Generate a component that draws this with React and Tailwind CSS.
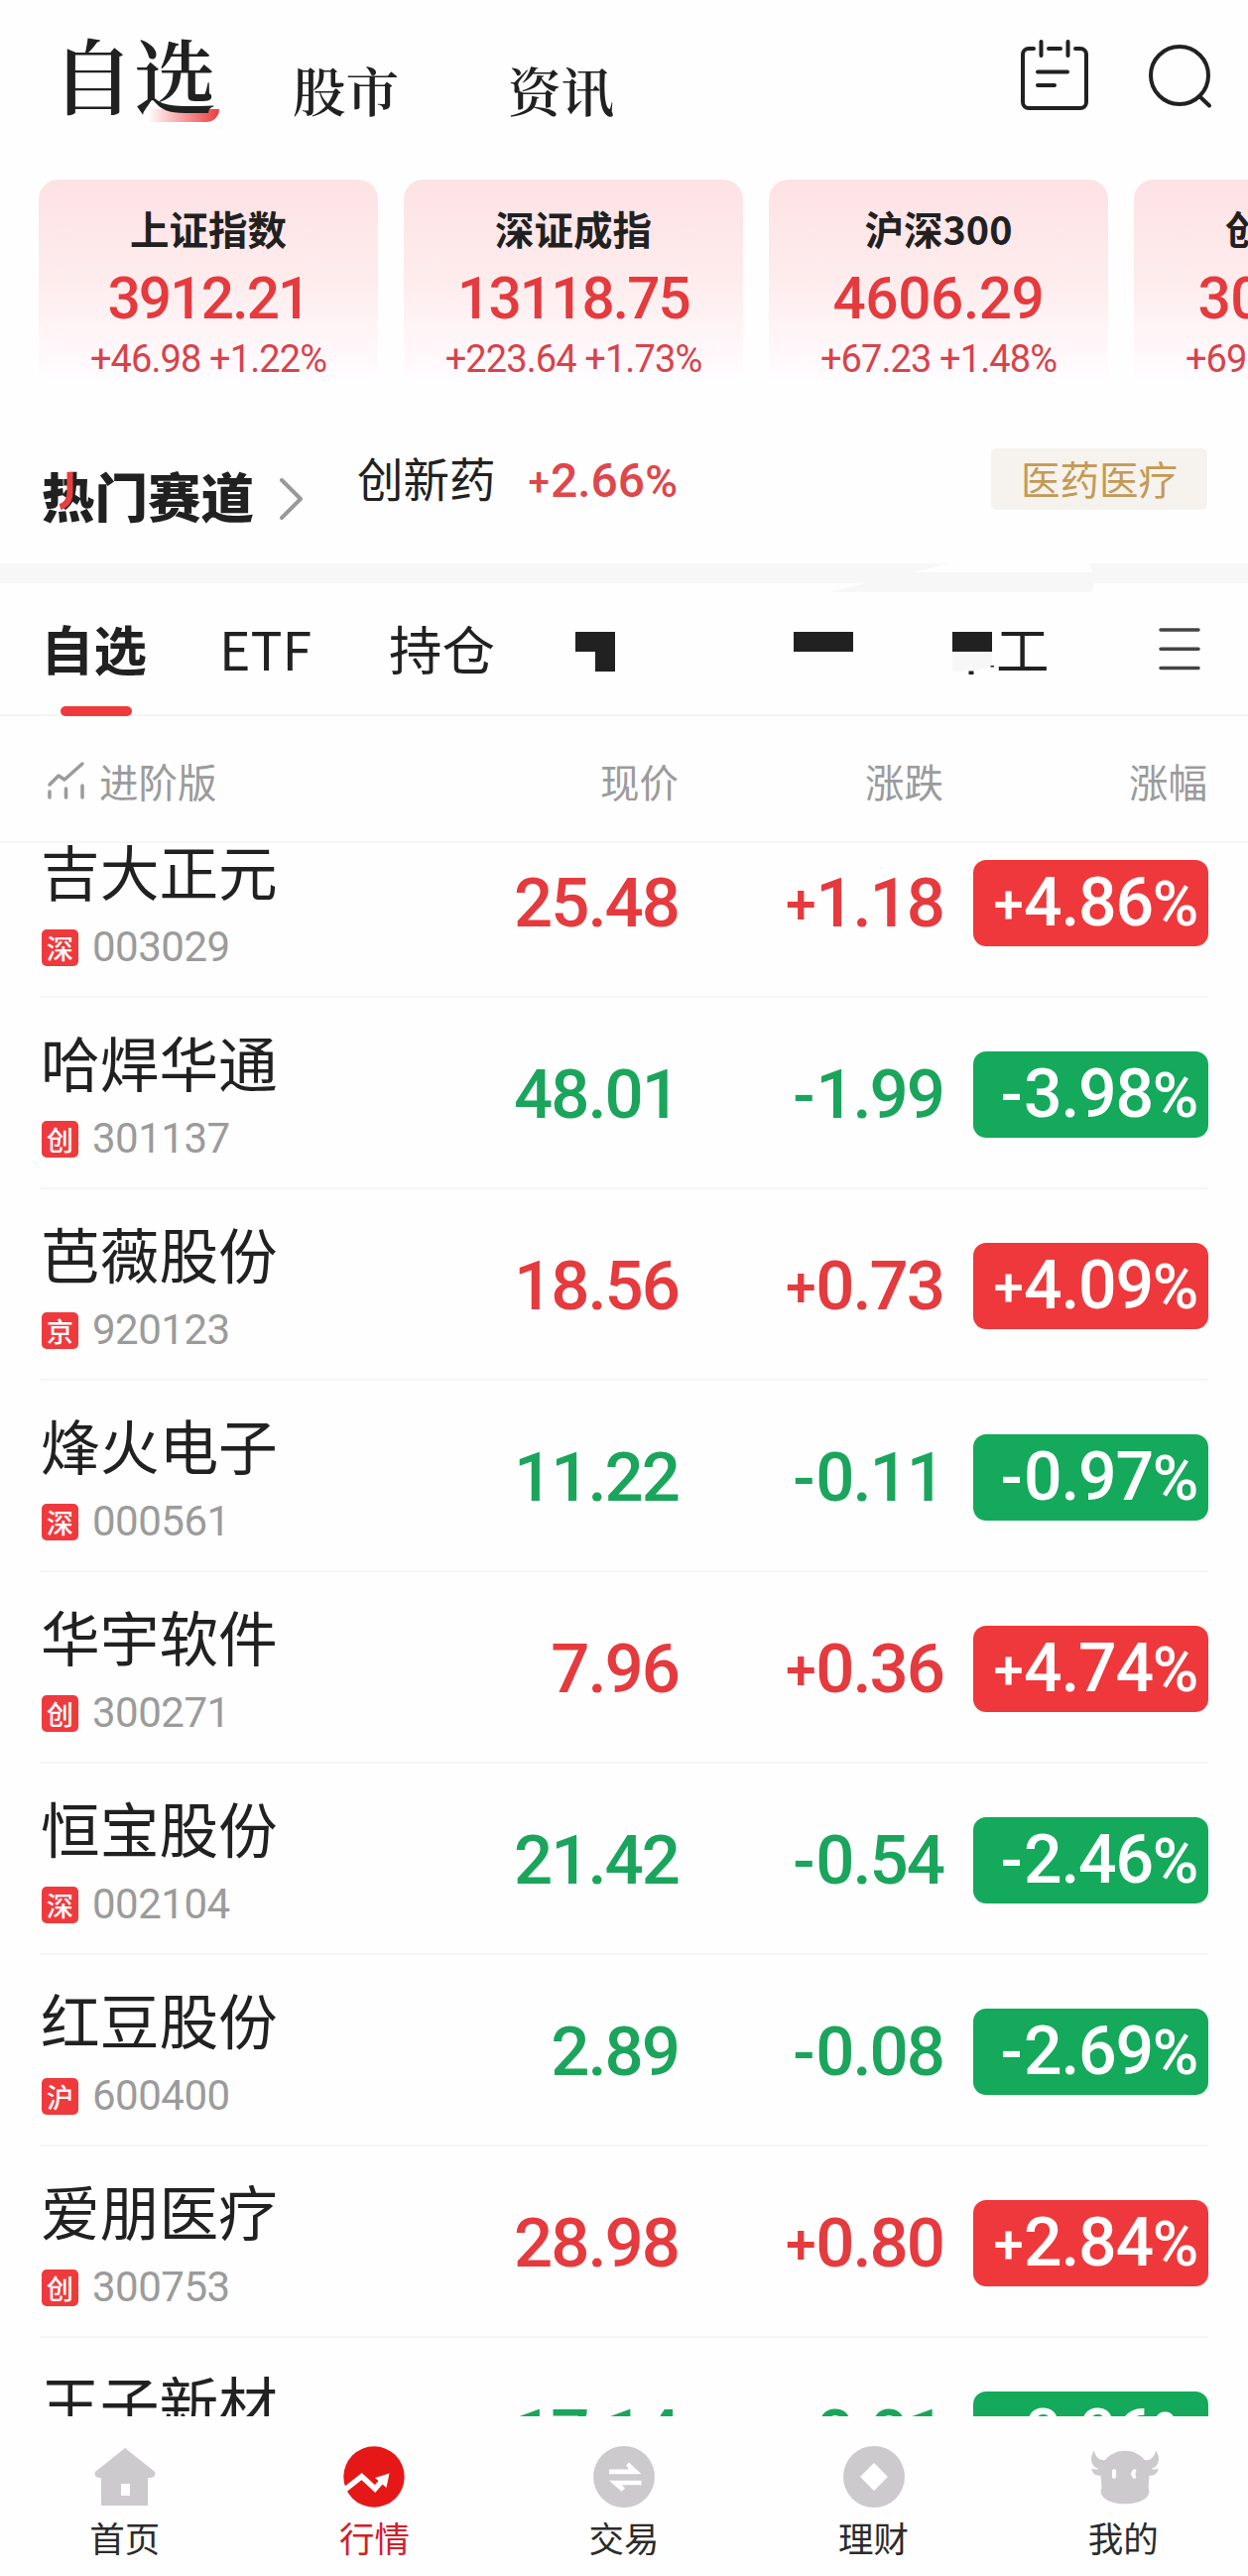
import clsx from "clsx";

const INDEXES = [
  { name: "上证指数", value: "3912.21", change: "+46.98 +1.22%", tracking: "tracking-[-1.8px]" },
  { name: "深证成指", value: "13118.75", change: "+223.64 +1.73%", tracking: "tracking-[-1.9px]" },
  { name: "沪深300", value: "4606.29", change: "+67.23 +1.48%", tracking: "tracking-[-0.4px]" },
  { name: "创业板指", value: "3022.77", change: "+69.27 +2.35%", tracking: "tracking-[-0.4px]" },
];

const STOCKS = [
  { name: "吉大正元", market: "深", code: "003029", price: "25.48", diff: "+1.18", rate: "+4.86%" },
  { name: "哈焊华通", market: "创", code: "301137", price: "48.01", diff: "-1.99", rate: "-3.98%" },
  { name: "芭薇股份", market: "京", code: "920123", price: "18.56", diff: "+0.73", rate: "+4.09%" },
  { name: "烽火电子", market: "深", code: "000561", price: "11.22", diff: "-0.11", rate: "-0.97%" },
  { name: "华宇软件", market: "创", code: "300271", price: "7.96", diff: "+0.36", rate: "+4.74%" },
  { name: "恒宝股份", market: "深", code: "002104", price: "21.42", diff: "-0.54", rate: "-2.46%" },
  { name: "红豆股份", market: "沪", code: "600400", price: "2.89", diff: "-0.08", rate: "-2.69%" },
  { name: "爱朋医疗", market: "创", code: "300753", price: "28.98", diff: "+0.80", rate: "+2.84%" },
  { name: "王子新材", market: "深", code: "002735", price: "17.14", diff: "-0.01", rate: "-0.06%" },
];

// the sign and the percent mark are set a little smaller than the digits
function Num({ text }) {
  const sign = /^[+-]/.test(text) ? text[0] : "";
  const pct = text.endsWith("%") ? "%" : "";
  const digits = text.slice(sign.length, text.length - pct.length);
  return (
    <>
      {sign && (
        <span className={sign === "+" ? "mr-[0.03em] align-[0.06em] text-[0.8em] leading-none" : "mr-[0.04em] text-[0.95em]"}>
          {sign}
        </span>
      )}
      {digits}
      {pct && <span className="text-[0.93em]">{pct}</span>}
    </>
  );
}

function Header() {
  return (
    <header className="flex h-[181px] items-start justify-between pr-[34px] pl-[52px] font-['Noto_Serif_CJK_SC','Noto_Sans_CJK_SC',serif] text-[#212121]">
      <div className="flex items-start">
        <div className="relative mt-[24px] w-[166px] text-[83px] leading-[98px] font-semibold">
          <span className="relative z-10">自选</span>
          <span className="absolute top-[86px] left-[97px] h-[13px] w-[72px] rounded-br-[20px] bg-gradient-to-r from-[#ef3a3d]/0 to-[#ef3a3d]" />
        </div>
        <div className="mt-[58px] ml-[77px] w-[107px] text-[53.500px] leading-[64px] font-semibold">股市</div>
        <div className="mt-[58px] ml-[110px] text-[53.500px] leading-[64px] font-semibold">资讯</div>
      </div>
      <div className="flex">
        <svg className="mt-[38px] h-[76px] w-[72px]" viewBox="0 0 72 76" fill="none" stroke="#212121" strokeWidth="4" strokeLinecap="round">
          <path d="M15 11H10a6 6 0 0 0-6 6v48a6 6 0 0 0 6 6h52a6 6 0 0 0 6-6V17a6 6 0 0 0-6-6h-5M30 11h12M22.500 4v14M49.500 4v14M19 34.500h30M19 48h17" />
        </svg>
        <svg className="mt-[43px] ml-[57px] h-[68px] w-[68px]" viewBox="0 0 68 68" fill="none" stroke="#212121" strokeWidth="4" strokeLinecap="round">
          <circle cx="33" cy="33" r="29" />
          <path d="M53 54l10 9.500" />
        </svg>
      </div>
    </header>
  );
}

function IndexCards() {
  return (
    <section className="flex h-[201px] gap-[26px] overflow-hidden pl-[39px]">
      {INDEXES.map((item) => (
        <div
          key={item.name}
          className="flex w-[342px] shrink-0 flex-col items-center rounded-t-[20px] bg-gradient-to-b from-[#fde2e5] via-[#feeced] to-[#fffcff] whitespace-nowrap"
        >
          <div className="mt-[24px] h-[50px] text-[39.500px] leading-[50px] font-bold text-[#212121]">{item.name}</div>
          <div className={clsx("mt-[11px] h-[70px] font-['Roboto'] text-[58.500px] leading-[70px] font-medium text-[#e53a3e]", item.tracking)}>
            {item.value}
          </div>
          <div className="mt-[6px] h-[40px] font-['Roboto'] text-[38px] leading-[40px] tracking-[-0.9px] text-[#d8434a]">
            {item.change}
          </div>
        </div>
      ))}
    </section>
  );
}

function HotTracks() {
  return (
    <section className="flex h-[186px] items-start pr-[41px] pl-[42px]">
      <div className="relative mt-[82px] text-[53.500px] leading-[70px] font-black text-[#212121]">
        热门赛道
        <svg className="absolute top-[12px] left-[17px] h-[38px] w-[16px]" viewBox="0 0 16 38" fill="none" stroke="#e93f41" strokeWidth="6">
          <path d="M11.500 0v20c0 8-3 13-10 15" />
        </svg>
      </div>
      <svg className="mt-[98px] ml-[24px] h-[46px] w-[28px]" viewBox="0 0 28 46" fill="none" stroke="#999" strokeWidth="4" strokeLinecap="round" strokeLinejoin="round">
        <path d="M4 4l19 19L4 42" />
      </svg>
      <div className="mt-[67px] ml-[52px] text-[46.500px] leading-[64px] text-[#212121]">创新药</div>
      <div className="mt-[71px] ml-[33px] font-['Roboto'] text-[48px] leading-[64px] font-medium text-[#de474c]">
        <Num text="+2.66%" />
      </div>
      <div className="mt-[70px] ml-auto flex h-[62px] w-[218px] items-center justify-center rounded-[6px] bg-[#f6f3ee] pb-[2px] text-[39.500px] text-[#c39a55]">
        医药医疗
      </div>
    </section>
  );
}

function Divider() {
  return (
    <div className="relative h-[20px] bg-[#f7f7f8]">
      <svg className="absolute top-0 left-[830px] h-[30px] w-[280px]" viewBox="0 0 280 30">
        <path d="M126 0L90 9h181q0-6-4-9z" fill="#fefefe" />
        <path d="M42 20L6 29h264.500q2-4 2-9z" fill="#f7f7f8" />
      </svg>
    </div>
  );
}

function Tabs() {
  return (
    <nav className="flex h-[134px] items-start border-b-2 border-[#f5f5f6] pr-[46px] pl-[41px] text-[53.500px] leading-[76px] text-[#212121]">
      <div className="relative mt-[27px] w-[107px] font-bold">
        自选
        <span className="absolute top-[97px] left-[20px] h-[10px] w-[72px] rounded-[5px] bg-[#ef3a3d]" />
      </div>
      <div className="mt-[27px] ml-[73px] w-[94px]">ETF</div>
      <div className="mt-[27px] ml-[77px] w-[107px]">持仓</div>
      <svg className="mt-[49px] ml-[81px] h-[40px] w-[40px]" viewBox="0 0 40 40">
        <path d="M0 0h40v40H20V20H0z" fill="#212121" />
      </svg>
      <div className="mt-[49px] ml-[180px] h-[20px] w-[60px] bg-[#212121]" />
      <svg className="mt-[49px] ml-[100px] h-[44px] w-[44px]" viewBox="0 0 44 44">
        <path d="M0 0h40v20H0z" fill="#212121" />
        <path d="M0 20h40v14q-12 6-40 6z" fill="#f7f7f7" />
        <path d="M16.500 39.500h5v3.500h-5zM38.500 34h3.500v1.500h-3.500z" fill="#212121" />
      </svg>
      <div className="mt-[27px]">工</div>
      <svg className="mt-[44px] ml-auto h-[46px] w-[46px]" viewBox="0 0 46 46" stroke="#444" strokeWidth="3.500" strokeLinecap="round">
        <path d="M4 3h38M4 22.300h38M4 41.500h38" />
      </svg>
    </nav>
  );
}

function TableHead() {
  return (
    <div className="flex h-[128px] items-center border-b-2 border-[#f5f5f6] pt-[4px] pr-[41px] pl-[47px] text-[39.500px] text-[#9b9b9b]">
      <svg className="h-[40px] w-[40px]" viewBox="0 0 40 40" fill="none" stroke="#9b9b9b" strokeWidth="3.500" strokeLinecap="round" strokeLinejoin="round">
        <path d="M3 24l9-9 6 4L36 3M3 31v6M19.500 28v9M36 25v12" />
      </svg>
      <div className="ml-[13px]">进阶版</div>
      <div className="ml-auto">现价</div>
      <div className="w-[267px] text-right">涨跌</div>
      <div className="w-[266px] text-right">涨幅</div>
    </div>
  );
}

function StockRow({ stock }) {
  const up = stock.diff.startsWith("+");
  return (
    <div className="mx-[40px] flex h-[193px] shrink-0 items-start border-b-2 border-[#f6f6f7]">
      <div className="w-[300px] pt-[24px]">
        <div className="h-[80px] pl-[1px] text-[59.700px] leading-[80px] text-[#212121]">{stock.name}</div>
        <div className="mt-[14px] flex h-[48px] items-center pl-[2px]">
          <span className="flex h-[37px] w-[37px] items-center justify-center rounded-[5px] bg-[#ef3a3d] text-[27px] leading-[37px] font-medium text-white">
            {stock.market}
          </span>
          <span className="ml-[14px] font-['Roboto'] text-[42px] leading-[48px] tracking-[-0.5px] text-[#9b9b9b]">{stock.code}</span>
        </div>
      </div>
      <div
        className={clsx(
          "flex flex-1 items-start justify-end font-['Roboto'] text-[69px] leading-[88px] font-medium tracking-[-2px]",
          up ? "text-[#e53a3e]" : "text-[#1ba55c]"
        )}
      >
        <div className="mt-[54px] w-[260px] text-right">{stock.price}</div>
        <div className="mt-[54px] w-[267px] text-right">
          <Num text={stock.diff} />
        </div>
        <div
          className={clsx(
            "mt-[54px] ml-[30px] h-[87px] w-[237px] rounded-[13px] pr-[11px] text-right text-[68px] leading-[87px] tracking-[-1.3px] text-white",
            up ? "bg-[#ef383b]" : "bg-[#14a95b]"
          )}
        >
          <Num text={stock.rate} />
        </div>
      </div>
    </div>
  );
}

const NAV = [
  {
    label: "首页",
    icon: (
      <path
        fillRule="evenodd"
        fill="#cdcace"
        d="M32 3L62 27q2 5-4 6h-3v28H8V33H6q-6-1-4-6zM28 39v12h9V39z"
      />
    ),
  },
  {
    label: "行情",
    active: true,
    icon: (
      <>
        <circle cx="32" cy="32" r="30.700" fill="#e61717" />
        <path d="M-1 45l5-1 15.600-12.400L33 44l8-9" fill="none" stroke="#fff" strokeWidth="5.500" />
        <path d="M47.500 28.500L33 33l11.500 10z" fill="#fff" />
      </>
    ),
  },
  {
    label: "交易",
    icon: (
      <>
        <circle cx="32" cy="32" r="31" fill="#cdcace" />
        <path d="M17 24.500h20l-3-4 3-3L49.500 29.300H17zM49.500 40.300H30l3 3.500-3.500 3L17 35.700h32.500z" fill="#fff" />
      </>
    ),
  },
  {
    label: "理财",
    icon: (
      <>
        <circle cx="32" cy="32" r="31" fill="#cdcace" />
        <path d="M32 18l14 14-14 14-14-14z" fill="#fff" />
      </>
    ),
  },
  {
    label: "我的",
    icon: (
      <>
        <path
          fill="#cdcace"
          d="M3 5.500C-1 11-1 17 3 21.500q2 2 4.500 2.200Q4 25.500.500 23.500C.500 28 4 31.500 9.500 30.500L10.500 43c-1.500 3-1 6 .5 8 3 5 12 8.300 23 8.300s20-3.300 23-8.300c1.500-2 2-5 .5-8l1-12.500c5.500 1 9-2.500 9-7q-3.500 2-7 .2 2.500-.2 4.500-2.200c4-4.500 4-10.500 0-16-1 6-5 10.500-11 9.500C49 9 42 5.700 34 5.700S19 9 14 15C8 16 4 11.500 3 5.500z"
        />
        <path d="M21 25.500q2-2.500 4 0v7q-2 2.500-4 0zM45.500 25.500q-2-2.500-4 0-3 3.500 0 7 2 2.500 4 0-2-3.500 0-7z" fill="#fff" />
      </>
    ),
  },
];

function BottomNav() {
  return (
    <nav className="flex h-[161px] bg-[#fefefe]">
      {NAV.map((item) => (
        <div key={item.label} className="flex flex-1 flex-col items-center pt-[29px]">
          <svg className="h-[64px] w-[64px] overflow-visible" viewBox="0 0 64 64">
            {item.icon}
          </svg>
          <div className={clsx("mt-[4px] text-[35.500px] leading-[50px]", item.active ? "text-[#d22027]" : "text-[#2b2b2b]")}>
            {item.label}
          </div>
        </div>
      ))}
    </nav>
  );
}

export default function App() {
  return (
    <div className="flex h-[2597px] w-[1258px] flex-col overflow-hidden bg-[#fefefe] font-['Noto_Sans_CJK_SC',sans-serif]">
      <Header />
      <IndexCards />
      <HotTracks />
      <Divider />
      <Tabs />
      <TableHead />
      <main className="flex h-[1586px] flex-col justify-start overflow-hidden">
        <div className="-mt-[37px] flex flex-col">
          {STOCKS.map((stock) => (
            <StockRow key={stock.code} stock={stock} />
          ))}
        </div>
      </main>
      <BottomNav />
    </div>
  );
}
